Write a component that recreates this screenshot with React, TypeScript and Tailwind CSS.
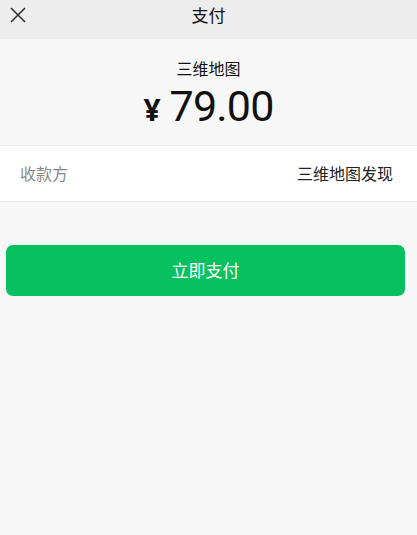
export default function App() {
  return (
    <div
      className="min-h-[535px] bg-[#f7f7f7] text-[#111]"
      style={{ fontFamily: '"Noto Sans", "Noto Sans CJK SC", sans-serif' }}
    >
      <header className="relative flex h-[39px] items-center justify-center bg-[#ededed]">
        <button className="absolute left-[9px] top-[6px] flex h-[18px] w-[18px] items-center justify-center text-[#333]">
          <svg width="16" height="16" viewBox="0 0 16 16" fill="none" stroke="currentColor" strokeWidth="1.6">
            <path d="M1 1 L15 15 M15 1 L1 15" />
          </svg>
        </button>
        <h1 className="-mt-[9px] text-[17px] font-normal leading-none">支付</h1>
      </header>

      <section className="flex h-[106px] flex-col items-center pt-[20px]">
        <p className="text-[16px] leading-[20px]">三维地图</p>
        <p className="mt-[6px] flex items-baseline leading-[34px]">
          <span className="mr-[9px] text-[30px] font-bold leading-none">¥</span>
          <span
            className="text-[43px] leading-none font-normal tracking-[-0.8px]"
            style={{ fontFamily: 'Roboto, sans-serif' }}
          >
            79.00
          </span>
        </p>
      </section>

      <div className="flex h-[57px] items-center justify-between border-y border-[#e8e8e8] bg-white px-[20px] text-[16px]">
        <span className="text-[#888]">收款方</span>
        <span className="mr-[4px] text-[#222]">三维地图发现</span>
      </div>

      <div className="px-[6px] pt-[43px]">
        <button className="flex h-[51px] w-[399px] items-center justify-center rounded-[7px] bg-[#07c160] text-[17px] font-normal text-white">
          立即支付
        </button>
      </div>
    </div>
  );
}
